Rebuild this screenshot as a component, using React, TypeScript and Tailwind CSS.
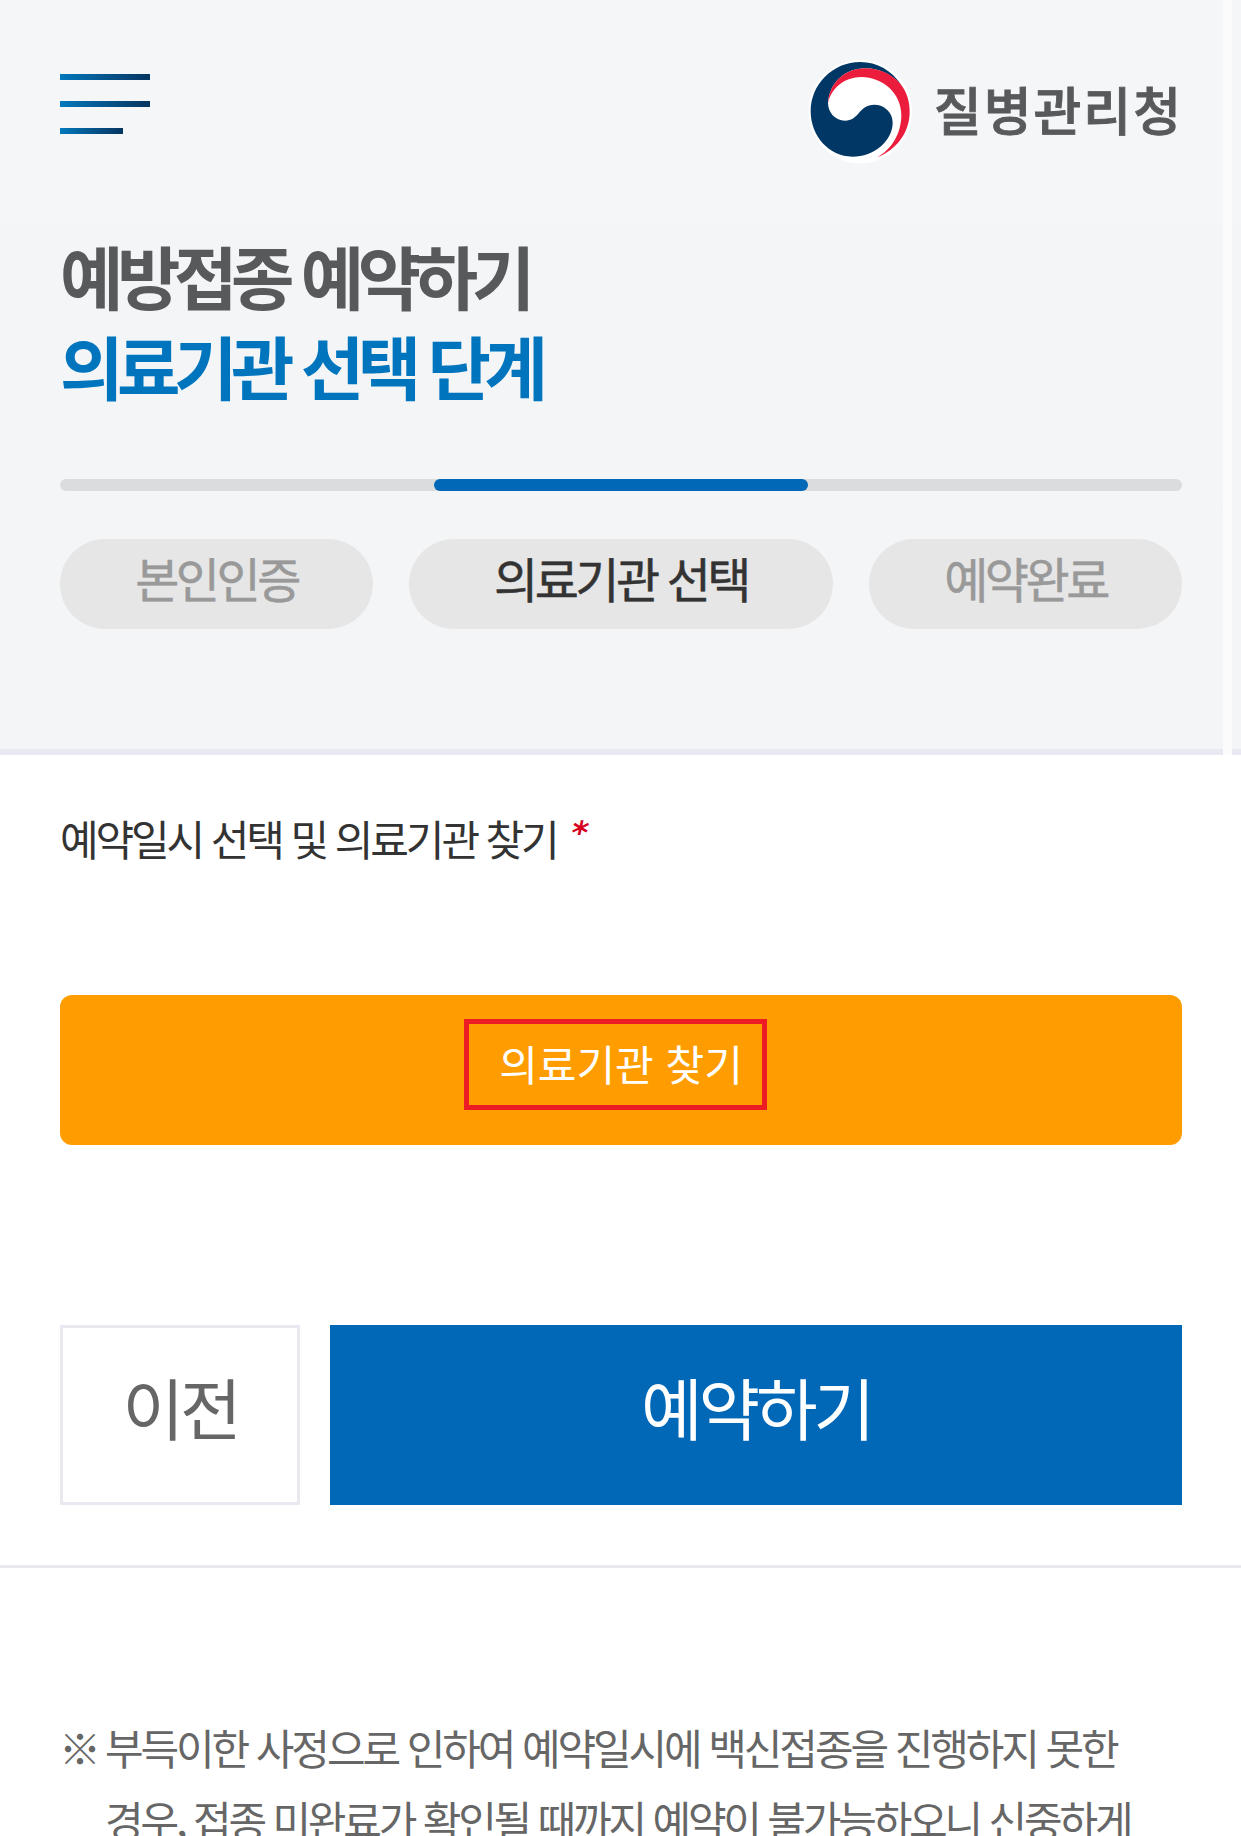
import React from 'react';

interface Step {
  label: string;
  width: string;
  active?: boolean;
}

const steps: Step[] = [
  { label: '본인인증', width: 'w-[313px]' },
  { label: '의료기관 선택', width: 'w-[424px]', active: true },
  { label: '예약완료', width: 'w-[313px]' }
];

function MenuButton() {
  return (
    <button type="button" aria-label="메뉴" className="flex flex-col gap-[21px] mt-[74px]">
      <span className="block w-[90px] h-1.5 bg-linear-to-r from-[#0078bc] to-[#063561]" />
      <span className="block w-[90px] h-1.5 bg-linear-to-r from-[#0078bc] to-[#063561]" />
      <span className="block w-[63px] h-1.5 bg-linear-to-r from-[#0078bc] to-[#063561]" />
    </button>
  );
}

function Logo() {
  return (
    <div className="flex mt-[59px]">
      <svg width="105" height="106" viewBox="82 58 315 318" className="shrink-0">
        <circle cx="239" cy="216" r="155" fill="#fff" />
        <path
          fill="#003764"
          d="M362 136C334 93 289 67 239 67C157 67 90 133 90 215C90 289 145 351 215 351C281 351 336 302 336 249C336 218 311 195 281 195C258 195 246 206 234 221C222 235 212 243 193 243C164 243 142 219 142 190C146 129 194 86 253 86C300 86 337 107 362 136Z"
        />
        <path
          fill="#ec1c3c"
          d="M142 190C146 129 194 86 253 86C300 86 340 108 362 136C379 159 387 187 387 216C387 280 346 331 289 353C333 330 362 281 362 226C362 161 306 112 242 112C192 112 151 146 142 190Z"
        />
      </svg>
      <span className="ml-[21px] -mr-px mt-[14px] text-[52px] leading-[72px] font-medium tracking-[2px] text-[#58595b] [-webkit-text-stroke:0.9px_#58595b] whitespace-nowrap">
        질병관리청
      </span>
    </div>
  );
}

export default function App() {
  return (
    <div
      lang="ko"
      className="w-[1241px] h-[1836px] overflow-hidden bg-white font-['Noto_Sans_CJK_KR',sans-serif]"
    >
      {/* Header */}
      <header className="flex h-[755px] bg-linear-to-b from-[#f4f6f8] from-[225px] to-[#f3f5f7] to-[225px]">
        <div className="w-[1223px] pl-[60px] border-b-6 border-[#e9e9f3]">
          <div className="flex justify-between h-[230px] w-[1122px]">
            <MenuButton />
            <Logo />
          </div>

          <h1 className="text-[69px] leading-[90px] font-bold tracking-[-6.5px] text-[#58595b] whitespace-nowrap">
            예방접종 예약하기
            <span className="block text-[#0075be]">의료기관 선택 단계</span>
          </h1>

          {/* Progress */}
          <div className="flex justify-center mt-[69px] w-[1122px] h-3 rounded-md bg-[#dbdcdd]">
            <div className="w-[374px] h-3 rounded-md bg-[#0068b7]" />
          </div>

          <ol className="flex justify-between mt-12 w-[1122px]">
            {steps.map((step) => (
              <li
                key={step.label}
                className={`${step.width} h-[90px] pb-3.5 rounded-full bg-[#e6e6e6] flex items-center justify-center text-[48px] tracking-[-3.5px] whitespace-nowrap [-webkit-text-stroke:0.5px] ${
                  step.active ? 'text-[#333]' : 'text-[#999]'
                }`}
              >
                {step.label}
              </li>
            ))}
          </ol>
        </div>
        <div className="w-[9px] bg-[#fbfbfc]" />
        <div className="flex-1 border-b-6 border-[#e9e9f3]" />
      </header>

      {/* Hospital search */}
      <section className="pl-[60px] pt-[47px] w-[1182px]">
        <div className="flex h-[72px] text-[42px] leading-[72px] text-[#333] whitespace-nowrap">
          <span className="tracking-[-3.1px]">예약일시 선택 및 의료기관 찾기</span>
          <em className="ml-[14px] -mt-[5px] h-[72px] not-italic -skew-x-12 font-['DejaVu_Sans',sans-serif] text-[32px] leading-[72px] font-bold text-[#d7001f]">
            *
          </em>
        </div>

        <button
          type="button"
          className="flex mt-[121px] w-full h-[150px] rounded-xl bg-[#ff9d00] pl-[404px] pt-6"
        >
          <span className="flex items-center justify-center w-[303px] h-[91px] pb-1 pl-[11px] border-5 border-[#ed1c24] text-[42px] text-white whitespace-nowrap">
            의료기관 찾기
          </span>
        </button>

        <div className="flex gap-[30px] mt-[180px] h-[180px] text-[67px] tracking-[-4.2px]">
          <button type="button" className="w-60 pb-[18px] border-3 border-[#e9e9f1] text-[#666]">
            이전
          </button>
          <button type="button" className="flex-1 pb-[18px] bg-[#0068b7] text-white">
            예약하기
          </button>
        </div>
      </section>

      {/* Notice */}
      <section className="mt-[60px] pt-[143px] pl-[58px] border-t-3 border-[#e9e9f1]">
        <p className="flex text-[42px] leading-[72px] tracking-[-3.1px] text-[#666] whitespace-nowrap">
          <span className="w-[47px] pl-px shrink-0 font-medium">※</span>
          <span>
            부득이한 사정으로 인하여 예약일시에 백신접종을 진행하지 못한
            <br />
            <span className="tracking-[-3.2px]">
              경우, 접종 미완료가 확인될 때까지 예약이 불가능하오니 신중하게
            </span>
          </span>
        </p>
      </section>
    </div>
  );
}
